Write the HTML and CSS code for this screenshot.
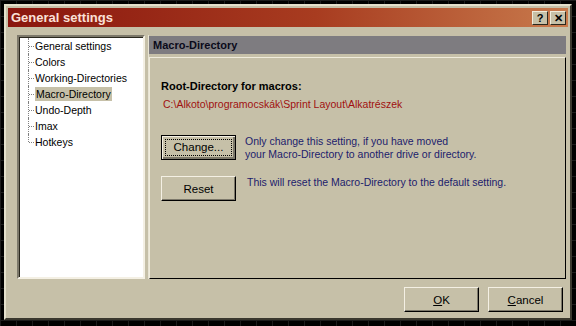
FILE: index.html
```html
<!DOCTYPE html>
<html lang="en">
<head>
  <meta charset="UTF-8">
  <title>General settings</title>
  <link rel="stylesheet" href="styles.css">
</head>
<body>
<div class="window">
  <div class="titlebar">
    <span class="caption">General settings</span>
    <span class="tbtn">?</span>
    <span class="tbtn">&#x2715;</span>
  </div>
  <div class="main">
    <ul class="tree">
      <li>General settings</li>
      <li>Colors</li>
      <li>Working-Directories</li>
      <li><span class="sel">Macro-Directory</span></li>
      <li>Undo-Depth</li>
      <li>Imax</li>
      <li class="last">Hotkeys</li>
    </ul>
    <div class="panel">
      <div class="header">Macro-Directory</div>
      <div class="box">
        <div class="label">Root-Directory for macros:</div>
        <div class="path">C:\Alkoto\programocskák\Sprint Layout\Alkatrészek</div>
        <div class="row">
          <div class="btn default"><span class="focus">Change...</span></div>
          <div class="note">Only change this setting, if you have moved<br>your Macro-Directory to another drive or directory.</div>
        </div>
        <div class="row">
          <div class="btn">Reset</div>
          <div class="note one">This will reset the Macro-Directory to the default setting.</div>
        </div>
      </div>
    </div>
  </div>
  <div class="footer">
    <div class="btn"><u>O</u>K</div>
    <div class="btn"><u>C</u>ancel</div>
  </div>
</div>
</body>
</html>
```
FILE: styles.css
```css
html, body {
  margin: 0;
  height: 100%;
}
body {
  background-color: #000;
  background-image:
    linear-gradient(to right, #1c1c1c 1px, transparent 1px),
    linear-gradient(to bottom, #1c1c1c 1px, transparent 1px);
  background-size: 16px 16px;
  font-family: "Liberation Sans", Arial, sans-serif;
  font-size: 10.5px;
  overflow: hidden;
}
.window {
  margin: 4px 0 0 4px;
  width: 568px;
  height: 316px;
  background: #c6c0a8;
  border: 2px solid;
  border-color: #e4e0cc #3a382e #3a382e #e4e0cc;
  box-sizing: border-box;
  padding: 2px;
  display: flex;
  flex-direction: column;
}
.titlebar {
  height: 19px;
  background: linear-gradient(to right, #8a160e, #a83c20 55%, #c87a4c);
  display: flex;
  align-items: center;
  padding: 0 2px 0 3px;
  gap: 2px;
}
.caption {
  flex: 1;
  color: #fbe0d8;
  font-weight: bold;
  font-size: 13px;
}
.tbtn {
  width: 16px;
  height: 14px;
  box-sizing: border-box;
  background: #c6c0a8;
  border: 1px solid;
  border-color: #f0ecdc #2a281e #2a281e #f0ecdc;
  font-weight: bold;
  font-size: 11px;
  line-height: 12px;
  text-align: center;
  color: #000;
}
.main {
  display: flex;
  gap: 3px;
  padding: 8px 0 0 9px;
  height: 244px;
}
.tree {
  margin: 0;
  list-style: none;
  width: 128px;
  box-sizing: border-box;
  background: #fff;
  border: 2px solid;
  border-color: #7c786a #f4f0e4 #f4f0e4 #7c786a;
  box-shadow: inset 1px 1px 0 #2a281e;
  padding: 1px 0 0 9px;
}
.tree li {
  position: relative;
  height: 16px;
  line-height: 16px;
  padding-left: 6px;
  color: #000;
  border-left: 1px dotted #808080;
}
.tree li::before {
  content: "";
  position: absolute;
  left: 0;
  top: 8px;
  width: 5px;
  border-top: 1px dotted #808080;
}
.tree li.last {
  border-left-color: transparent;
}
.tree li.last::after {
  content: "";
  position: absolute;
  left: -1px;
  top: 0;
  height: 8px;
  border-left: 1px dotted #808080;
}
.sel {
  background: #c6c0a8;
  padding: 1px 1px;
}
.panel {
  width: 417px;
  display: flex;
  flex-direction: column;
  border-left: 1px solid #e8e4d4;
  padding-top: 1px;
}
.header {
  height: 18px;
  line-height: 18px;
  background: #7e7c80;
  color: #0a0a1a;
  font-weight: bold;
  font-size: 11px;
  padding-left: 4px;
}
.box {
  flex: 1;
  margin-top: 3px;
  border: 1px solid;
  border-color: #f0ecdc #000 #000 #f0ecdc;
  padding: 22px 0 0 11px;
}
.label {
  font-weight: bold;
  font-size: 11px;
  color: #000;
  height: 16px;
}
.path {
  color: #a01010;
  margin: 2px 0 0 2px;
  height: 16px;
}
.row {
  display: flex;
  align-items: flex-start;
  margin-top: 21px;
}
.row + .row {
  margin-top: 15px;
}
.btn {
  width: 75px;
  height: 25px;
  box-sizing: border-box;
  border: 1px solid;
  border-color: #f4f0e4 #000 #000 #f4f0e4;
  box-shadow: inset -1px -1px 0 #7c786a;
  display: flex;
  align-items: center;
  justify-content: center;
  color: #000;
  font-size: 11.5px;
}
.btn.default {
  border: 1px solid #000;
  box-shadow: inset 1px 1px 0 #f4f0e4, inset -2px -2px 0 #7c786a;
}
.focus {
  border: 1px dotted #000;
  width: 65px;
  height: 15px;
  line-height: 15px;
  text-align: center;
}
.note {
  color: #1c1c6c;
  margin-left: 9px;
  line-height: 13px;
}
.note.one {
  margin-left: 11px;
}
.footer {
  display: flex;
  justify-content: flex-end;
  gap: 9px;
  padding: 8px 5px 0 0;
}
```
